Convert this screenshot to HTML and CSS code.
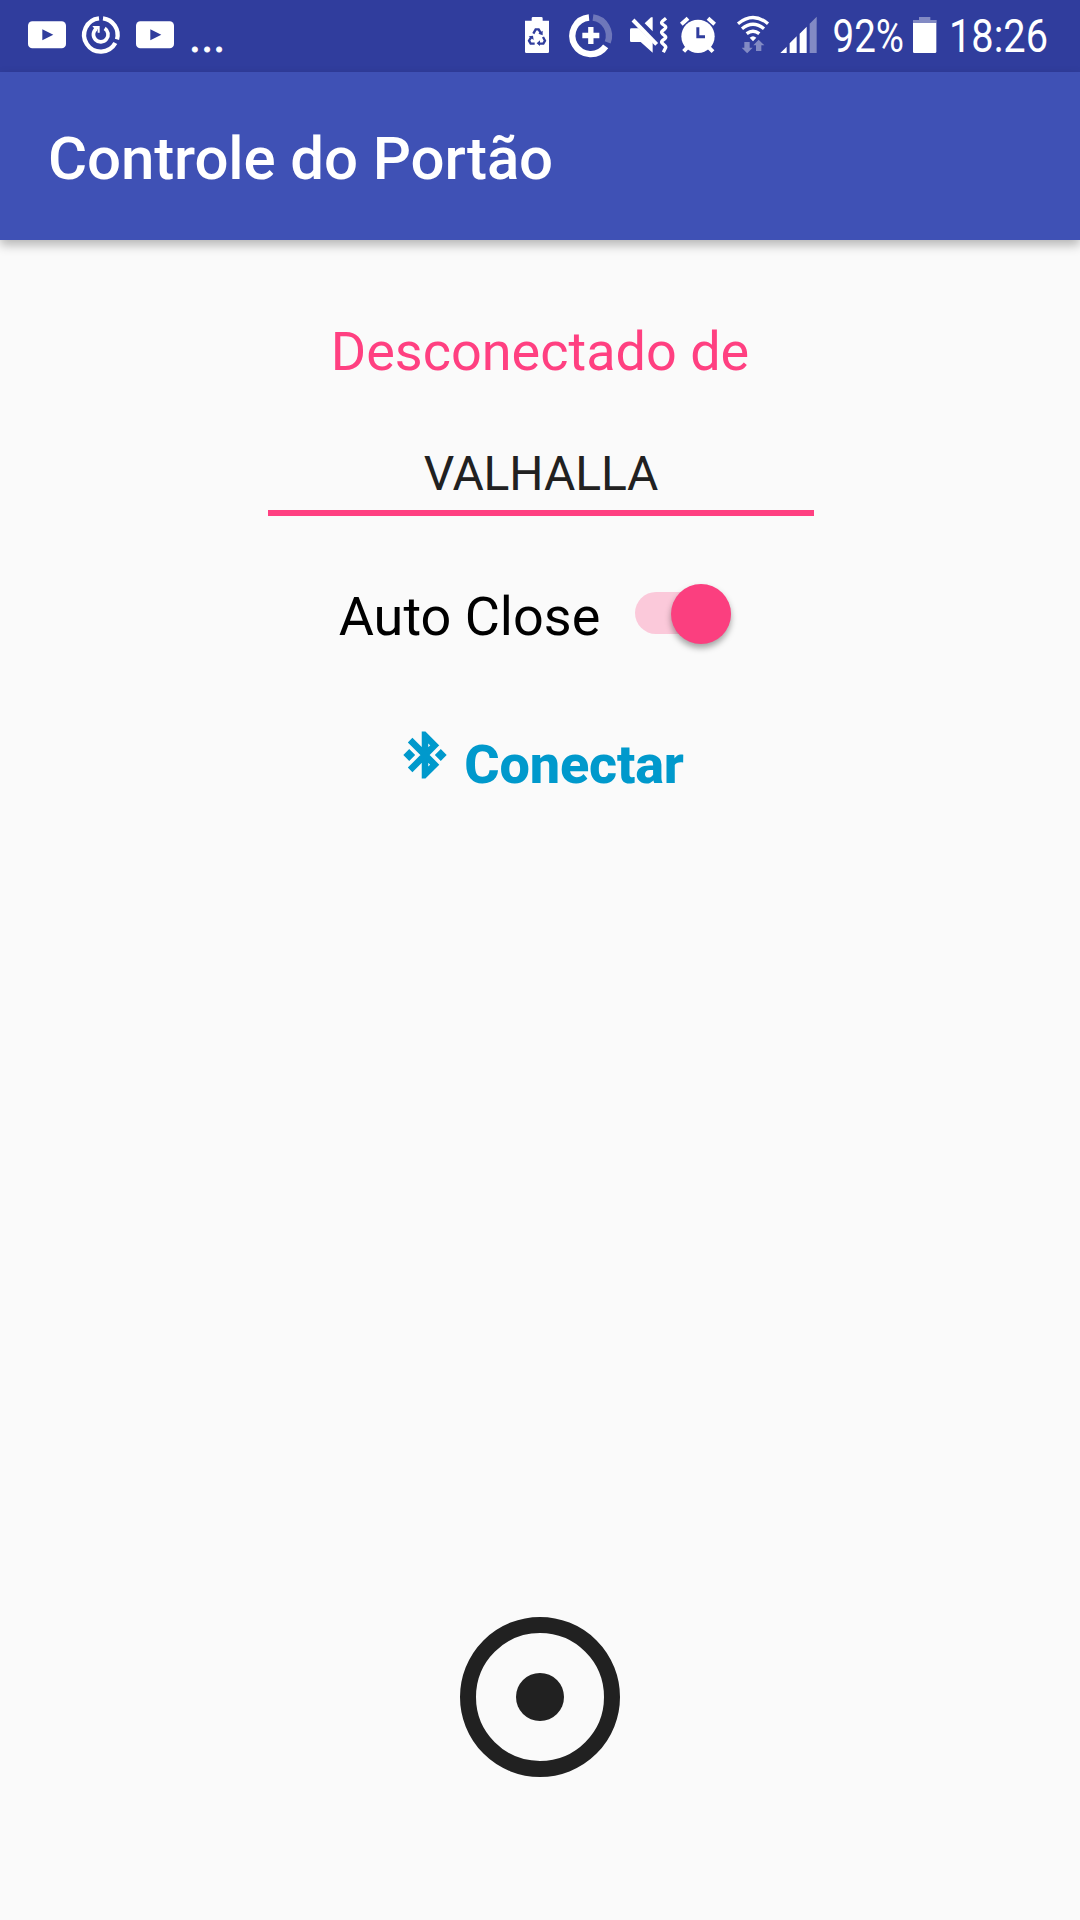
FILE: index.html
```html
<!DOCTYPE html>
<html lang="pt-BR">
<head>
<meta charset="utf-8">
<title>Controle do Portão</title>
<link rel="stylesheet" href="styles.css">
</head>
<body>
<div class="status-bar">
  <div class="notifications">
    <svg class="icon" width="38" height="72" viewBox="84 0 114 216"><rect x="84" y="64" width="114" height="81" rx="13" fill="#fff"/><path d="M127 88v33l33-17z" fill="#303d9d"/></svg>
    <svg class="icon" width="38" height="72" viewBox="246 0 114 216" fill="none" stroke="#fff"><path d="M309 55A50 50 0 0 1 351 118M346 129A50 50 0 1 1 297 55" stroke-width="13"/><path d="M314 85A22 22 0 1 1 289 86" stroke-width="11"/><path d="M277 78h22v20h-6v-10l-5 4z" fill="#fff" stroke="none"/></svg>
    <svg class="icon" width="38" height="72" viewBox="84 0 114 216"><rect x="84" y="64" width="114" height="81" rx="13" fill="#fff"/><path d="M127 88v33l33-17z" fill="#303d9d"/></svg>
    <span class="more">...</span>
  </div>
  <div class="system">
    <svg class="icon" width="24" height="72" viewBox="45 0 72 216"><path d="M45 62h20V55q0-4 4-4h25q4 0 4 4v7h19v93q0 4-4 4H49q-4 0-4-4z" fill="#fff"/><g fill="none" stroke="#303d9d" stroke-width="7"><path d="M70 101L77 88H86L93 100M99 111L105 122L100 131H86M74 131H62L57 122L64 111"/></g><path d="M98 92v14l-13-5zM90 121v17l-10-8zM56 109l13-2 2 13z" fill="#303d9d"/></svg>
    <svg class="icon saver" width="44" height="72" viewBox="176 0 132 216" fill="none" stroke="#fff"><path d="M236 52.500A55 55 0 1 0 286 139" stroke-width="19"/><path d="M248 52.500A55 55 0 0 1 292 127" stroke-width="19" opacity=".3"/><path d="M216 106.500h51M241.500 81v51" stroke-width="16"/></svg>
    <svg class="icon mute" width="38" height="72" viewBox="360 0 114 216"><path d="M364 85H386L428 127V158L392 126H364q-4 0-4-4V89q0-4 4-4zM404 70L423 52H428V94z" fill="#fff"/><path d="M369 60L440 133" stroke="#fff" stroke-width="12" fill="none"/><path d="M468 55L457 64Q453 68 457 72L465 78Q469 82 465 86L457 93Q453 97 457 101L465 108Q469 112 465 116L457 122Q453 126 457 130L465 137Q469 141 466 145L460 157" fill="none" stroke="#fff" stroke-width="10" stroke-linejoin="round"/></svg>
    <svg class="icon alarm" width="36" height="72" viewBox="30 0 108 216"><circle cx="84" cy="109" r="50" fill="#fff"/><g fill="none" stroke="#fff" stroke-width="12"><path d="M34 73L54 55M114 55L134 73M52 142L41 154M116 142L129 155"/></g><path d="M83.500 82v28H105" fill="none" stroke="#303d9d" stroke-width="9"/></svg>
    <svg class="icon wifi" width="32" height="72" viewBox="200 0 96 216"><g fill="none" stroke="#fff" stroke-width="10"><path d="M203 71Q248 34 293 71M215 86Q248 59 281 86M229 101Q248 86 267 101"/></g><path d="M238 113Q248 104 258 113L248 124z" fill="#fff"/><path d="M222 126h16v17h9L230.500 160L214 143h8zM257 153h16V136h9L265 119L249 136h8z" fill="#fff" opacity=".4"/></svg>
    <svg class="icon signal" width="37" height="72" viewBox="331 0 111 216" fill="#fff"><path d="M332 159L351 140V159zM360 130L381 109V159H360zM390 101L411 80V159H390z"/><path d="M420 71L441 50V159H420z" opacity=".4"/></svg>
    <svg class="icon percent" width="76" height="72" viewBox="830 0 76 72"><text x="832.500" y="52" textLength="71.500" lengthAdjust="spacingAndGlyphs">92%</text></svg>
    <svg class="icon battery" width="24" height="72" viewBox="279 0 72 216" fill="#fff"><path d="M297 51h34v9h19v9H279v-9h18z" opacity=".4"/><path d="M279 69h70v86q0 4-4 4H283q-4 0-4-4z"/></svg>
    <svg class="icon clock" width="104" height="72" viewBox="946 0 104 72"><text x="949" y="52" textLength="99" lengthAdjust="spacingAndGlyphs">18:26</text></svg>
  </div>
</div>
<header class="app-bar"><h1>Controle do Portão</h1></header>
<main class="content">
  <p class="state">Desconectado de</p>
  <div class="device">VALHALLA</div>
  <div class="auto-close">
    <span>Auto Close</span>
    <span class="switch"><span class="thumb"></span></span>
  </div>
  <div class="connect">
    <svg class="bluetooth" width="54" height="54" viewBox="0 0 24 24"><path fill="#0099cc" stroke="#0099cc" stroke-width=".9" d="M7 12l-2-2-2 2 2 2 2-2zm10.710-4.290L12 2h-1v7.590L6.410 5 5 6.410 10.590 12 5 17.590 6.410 19 11 14.410V22h1l5.710-5.710-4.300-4.290 4.300-4.290zM13 5.830l1.880 1.880L13 9.590V5.830zm1.880 10.460L13 18.170v-3.760l1.880 1.880zM19 10l-2 2 2 2 2-2-2-2z"/></svg>
    <span class="connect-label">Conectar</span>
  </div>
  <svg class="trigger" width="160" height="160" viewBox="0 0 160 160"><circle cx="80" cy="80" r="72" fill="none" stroke="#212121" stroke-width="16"/><circle cx="80" cy="80" r="24" fill="#212121"/></svg>
</main>
</body>
</html>
```
FILE: styles.css
```css
* { box-sizing: border-box; }
body {
  margin: 0;
  width: 1080px;
  height: 1920px;
  overflow: hidden;
  display: flex;
  flex-direction: column;
  background: #fafafa;
  font-family: Roboto, "Liberation Sans", sans-serif;
}
.status-bar {
  height: 72px;
  display: flex;
  justify-content: space-between;
  background: #303d9d;
  color: #fff;
  padding: 0 30px 0 28px;
}
.notifications { display: flex; gap: 16px; }
.system { display: flex; }
.icon { display: block; flex: none; overflow: visible; }
.icon text { font-size: 46px; fill: #fff; }
.more {
  font-size: 46px;
  line-height: 72px;
  margin-left: -1px;
  -webkit-text-stroke: .8px #fff;
}
.saver { margin-left: 19.700px; }
.mute { margin-left: 17.300px; }
.alarm { margin-left: 12px; }
.wifi { margin-left: 20.700px; }
.signal { margin-left: 11.600px; }
.percent { margin-left: 12.700px; }
.battery { margin-left: 7px; }
.clock { margin-left: 9px; }
.app-bar {
  height: 168px;
  flex: none;
  display: flex;
  align-items: center;
  padding: 6px 48px 0;
  background: #3f51b5;
  color: #fff;
  box-shadow: 0 5px 10px rgba(0, 0, 0, .28);
}
h1 {
  margin: 0;
  font-size: 60px;
  font-weight: 500;
  line-height: 70px;
  letter-spacing: -.12px;
}
.content {
  flex: 1;
  display: flex;
  flex-direction: column;
  align-items: center;
}
.state {
  margin: 80px 0 0;
  font-size: 54px;
  line-height: 64px;
  color: #ff4081;
}
.device {
  width: 546px;
  height: 77px;
  margin: 55px 0 0 2px;
  padding-top: 7px;
  border-bottom: 6px solid #ff4081;
  text-align: center;
  font-size: 48px;
  line-height: 56px;
  letter-spacing: -.1px;
  color: #212121;
}
.auto-close {
  height: 64px;
  margin: 69px 10px 0 0;
  display: flex;
  gap: 35px;
  font-size: 54px;
  line-height: 64px;
  color: #000;
}
.switch {
  width: 96px;
  height: 42px;
  margin-top: 7px;
  padding: 1px 0 0 35.500px;
  display: flex;
  align-items: center;
  border-radius: 21px;
  background: #fbc9da;
}
.thumb {
  width: 60px;
  height: 60px;
  flex: none;
  border-radius: 50%;
  background: #fb3f7f;
  box-shadow: 0 4px 6px rgba(0, 0, 0, .35);
}
.connect {
  margin: 80px 0 0 2px;
  height: 72px;
  display: flex;
  gap: 12px;
  color: #0099cc;
  font-size: 54px;
  line-height: 72px;
}
.bluetooth { margin-top: -1px; }
.connect-label {
  font-weight: 800;
  letter-spacing: -.2px;
}
.trigger { margin-top: 816px; }
```
